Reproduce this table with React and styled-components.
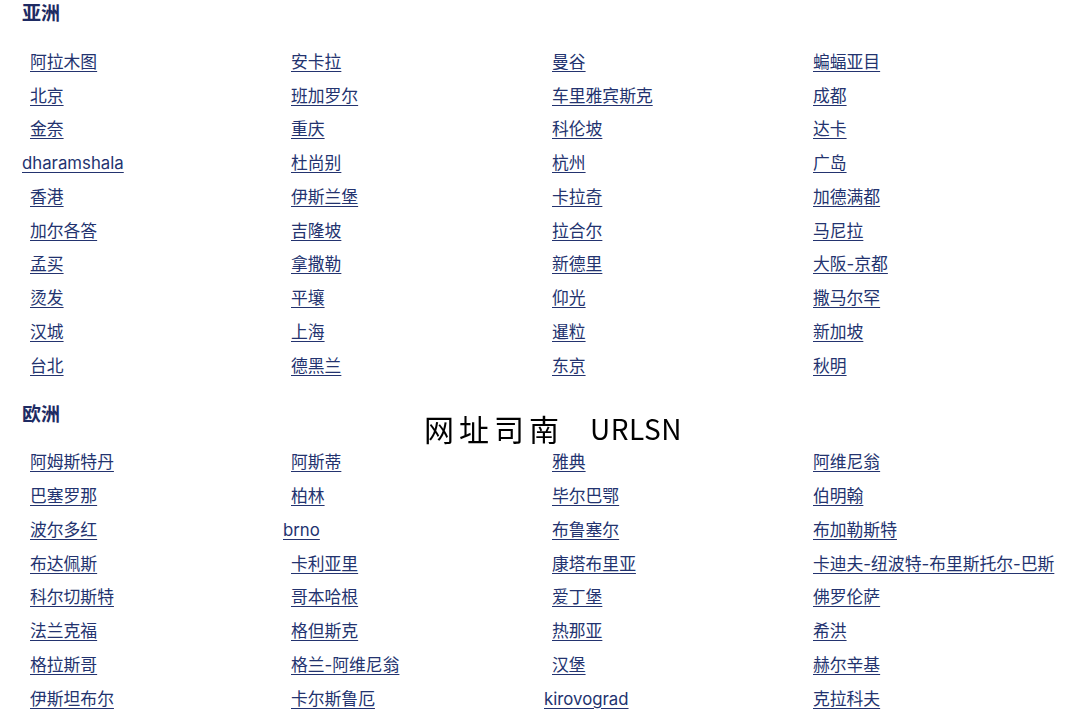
import React from 'react';
import styled, { createGlobalStyle } from 'styled-components';

// ============================
// Data
// ============================

const regions = [
  {
    name: '亚洲',
    cities: [
      '阿拉木图', '安卡拉', '曼谷', '蝙蝠亚目',
      '北京', '班加罗尔', '车里雅宾斯克', '成都',
      '金奈', '重庆', '科伦坡', '达卡',
      'dharamshala', '杜尚别', '杭州', '广岛',
      '香港', '伊斯兰堡', '卡拉奇', '加德满都',
      '加尔各答', '吉隆坡', '拉合尔', '马尼拉',
      '孟买', '拿撒勒', '新德里', '大阪-京都',
      '烫发', '平壤', '仰光', '撒马尔罕',
      '汉城', '上海', '暹粒', '新加坡',
      '台北', '德黑兰', '东京', '秋明',
    ],
  },
  {
    name: '欧洲',
    cities: [
      '阿姆斯特丹', '阿斯蒂', '雅典', '阿维尼翁',
      '巴塞罗那', '柏林', '毕尔巴鄂', '伯明翰',
      '波尔多红', 'brno', '布鲁塞尔', '布加勒斯特',
      '布达佩斯', '卡利亚里', '康塔布里亚', '卡迪夫-纽波特-布里斯托尔-巴斯',
      '科尔切斯特', '哥本哈根', '爱丁堡', '佛罗伦萨',
      '法兰克福', '格但斯克', '热那亚', '希洪',
      '格拉斯哥', '格兰-阿维尼翁', '汉堡', '赫尔辛基',
      '伊斯坦布尔', '卡尔斯鲁厄', 'kirovograd', '克拉科夫',
    ],
  },
];

// ============================
// Styled Components
// ============================

const GlobalStyle = createGlobalStyle`
  html, body {
    margin: 0;
    padding: 0;
    background: #ffffff;
  }
  body {
    font-family: Inter, "Noto Sans CJK SC", sans-serif;
  }
`;

const Page = styled.div`
  padding: 0 10px 0 22px;
`;

const Section = styled.section`
  margin-bottom: 18px;
`;

const Heading = styled.h2`
  margin: 0 0 17px;
  font-size: 19px;
  line-height: 28px;
  font-weight: 700;
  color: #1e2b63;
`;

const CityGrid = styled.ul`
  list-style: none;
  margin: 0;
  padding: 0;
  display: grid;
  grid-template-columns: repeat(4, 261px);
  grid-auto-rows: 33.75px;
`;

const CityItem = styled.li`
  display: flex;
  align-items: center;
  padding-left: ${(p) => (p.$latin ? '0' : '8px')};
  white-space: nowrap;
`;

const CityLink = styled.a`
  font-size: 16.8px;
  line-height: 22px;
  color: #23336f;
  text-decoration: underline;
  text-decoration-thickness: 1px;
  text-underline-offset: 3px;
`;

const Watermark = styled.div`
  position: fixed;
  left: 424px;
  top: 408px;
  display: flex;
  align-items: center;
  gap: 26px;
  font-family: "Noto Sans CJK SC", sans-serif;
  line-height: 40px;
  font-weight: 400;
  color: #000000;
  pointer-events: none;
  white-space: nowrap;
`;

const WatermarkCjk = styled.span`
  font-size: 30px;
  letter-spacing: 5px;
`;

const WatermarkLatin = styled.span`
  font-size: 28px;
  letter-spacing: 0.5px;
`;

// ============================
// App Component
// ============================

const isLatin = (s) => /^[a-z]/i.test(s);

function App() {
  return (
    <>
      <GlobalStyle />
      <Page>
        {regions.map((region) => (
          <Section key={region.name}>
            <Heading>{region.name}</Heading>
            <CityGrid>
              {region.cities.map((city) => (
                <CityItem key={city} $latin={isLatin(city)}>
                  <CityLink href="#">{city}</CityLink>
                </CityItem>
              ))}
            </CityGrid>
          </Section>
        ))}
      </Page>
      <Watermark>
        <WatermarkCjk>网址司南</WatermarkCjk>
        <WatermarkLatin>URLSN</WatermarkLatin>
      </Watermark>
    </>
  );
}

export default App;
